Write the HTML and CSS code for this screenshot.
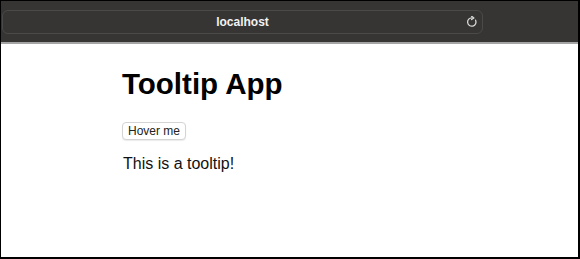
FILE: index.html
```html
<!DOCTYPE html>
<html lang="en">
<head>
    <meta charset="UTF-8">
    <title>Tooltip App</title>
    <link rel="stylesheet" href="styles.css">
</head>
<body>

    <div class="window">
        <!-- browser toolbar -->
        <div class="toolbar">
            <div class="address">
                <span class="url">localhost</span>
                <svg class="reload" width="12" height="12" viewBox="0 0 12 12">
                    <path d="M9.6 4.2 A4.2 4.2 0 1 1 6 1.8" fill="none" stroke="#d8d8d8" stroke-width="1.3" stroke-linecap="round"/>
                    <path d="M5.6 0.2 L7.9 1.9 L5.6 3.6" fill="none" stroke="#d8d8d8" stroke-width="1.3" stroke-linecap="round" stroke-linejoin="round"/>
                </svg>
            </div>
        </div>

        <!-- page -->
        <div class="page">
            <h1>Tooltip App</h1>
            <button class="btn">Hover me</button>
            <p class="tip">This is a tooltip!</p>
        </div>
    </div>

</body>
</html>
```

FILE: styles.css
```css
/* General Styles */
body {
    margin: 0;
    font-family: 'Liberation Sans', Arial, sans-serif;
}

.window {
    width: 580px;
    height: 259px;
    box-sizing: border-box;
    border: 1px solid #000;
    border-right-width: 2px;
    border-bottom-width: 2px;
    background: #fff;
    overflow: hidden;
}

.toolbar {
    height: 43px;
    background: #363534;
    border-bottom: 2px solid #a4a4a4;
    padding: 9px 0 0 1px;
    box-sizing: border-box;
}

.address {
    position: relative;
    width: 481px;
    height: 24px;
    box-sizing: border-box;
    border: 1px solid #4b4a49;
    border-radius: 6px;
    display: flex;
    align-items: center;
    justify-content: center;
}

.url {
    color: #f2f2f2;
    font-size: 12px;
    font-weight: bold;
}

.reload {
    position: absolute;
    right: 4px;
    top: 5px;
}

.page {
    padding-left: 121px;
}

h1 {
    font-size: 29.5px;
    line-height: 34px;
    margin: 23px 0 21px;
    color: #000;
}

.btn {
    display: block;
    height: 18px;
    padding: 0 5px;
    font-family: 'Liberation Sans', Arial, sans-serif;
    font-size: 12px;
    color: #222;
    background: #fff;
    border: 1px solid #d4d4d4;
    border-radius: 4px;
    box-shadow: 0 1px 1px rgba(0, 0, 0, 0.08);
}

.tip {
    font-size: 16px;
    line-height: 18px;
    margin: 15px 0 0 1px;
    color: #111;
}
```
